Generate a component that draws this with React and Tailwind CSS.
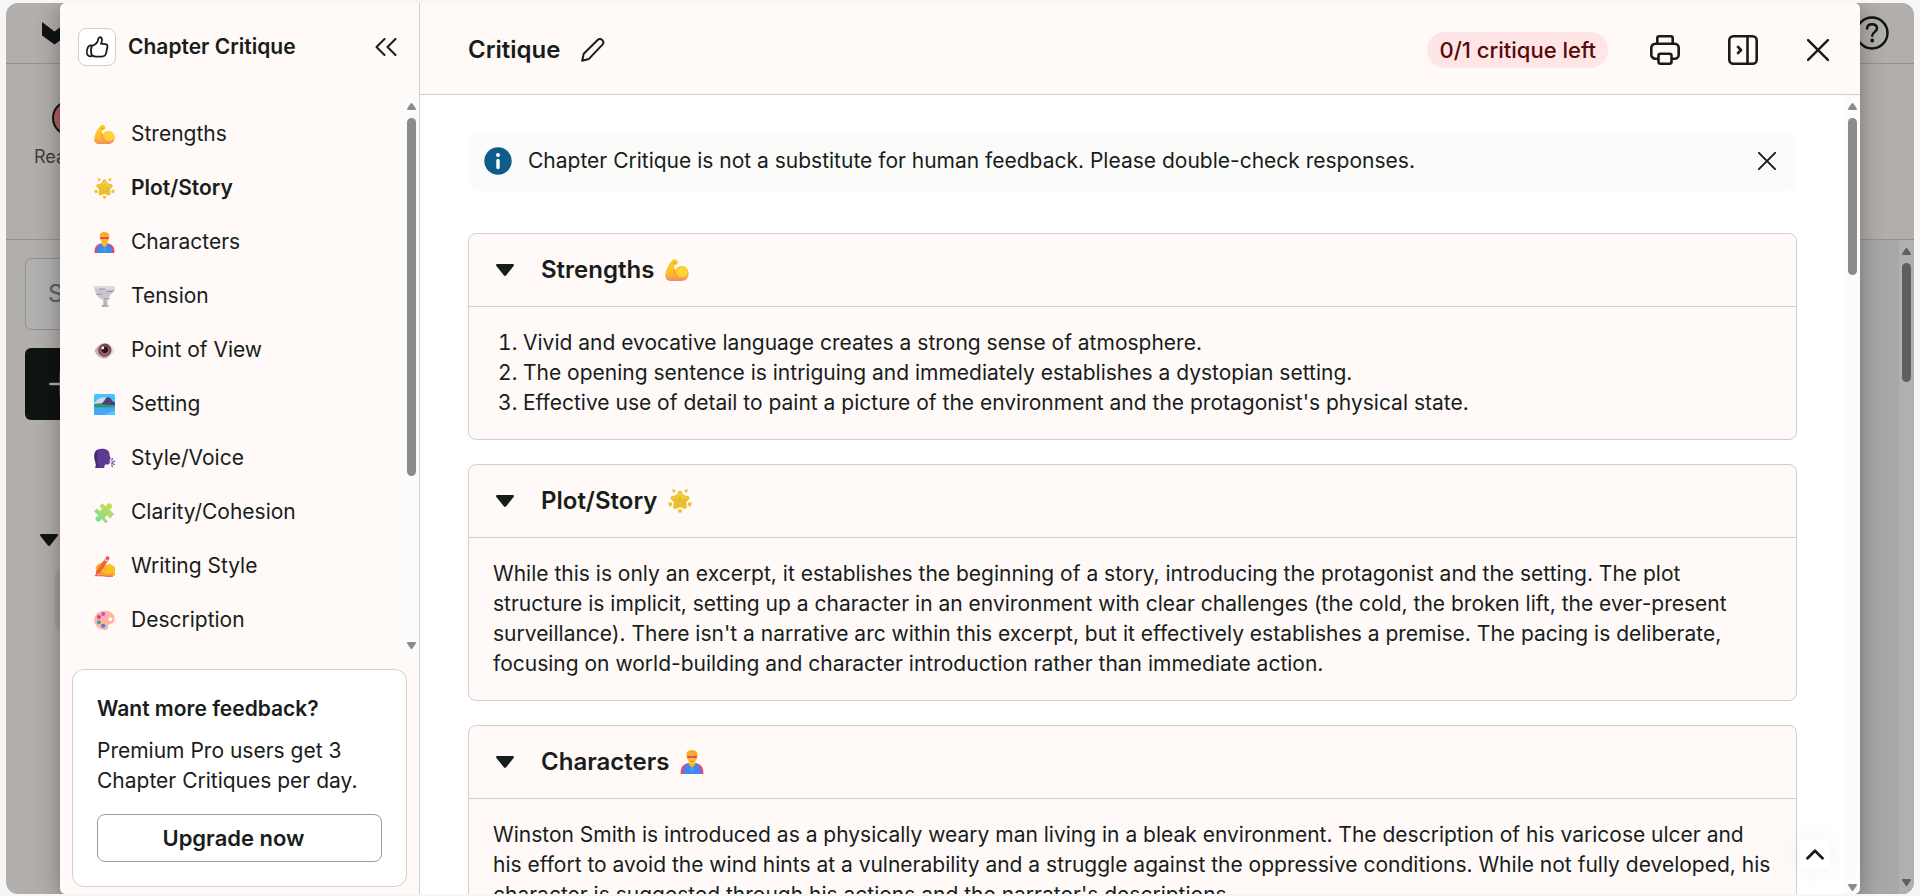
import React, { useState } from 'react';
import clsx from 'clsx';

/* ---------- UI icons ---------- */

const ThumbIcon = () => (
  <svg width="24" height="24" viewBox="0 0 24 24" fill="none" stroke="currentColor" strokeWidth="1.8" strokeLinecap="round" strokeLinejoin="round">
    <path d="M6.800 11c2.800-.9 5.200-2.700 6-5.200.4-1.400.3-3.200 1.800-3.500 1.700-.3 2.600 1.300 2.400 3-.1 1.300-.6 2.300-1 3.400l4.300.4c1.600.1 2.400 1.200 2.100 2.600l-1.200 6.100c-.5 2.300-2 3.600-4.200 3.700l-5.500.1c-1.800 0-3.300-.5-4.400-1.400" />
    <path d="M7 10.500c-1.400-.4-3.100.1-3.900 1.500-1.100 1.900-1.600 4.600-1 7 .5 1.800 2.500 2.800 4.900 2-1.200-2.500-1.400-7.500 0-10.500z" />
  </svg>
);

const CollapseIcon = () => (
  <svg width="22" height="18" viewBox="0 0 22 18" fill="none" stroke="currentColor" strokeWidth="2" strokeLinecap="round" strokeLinejoin="round">
    <path d="M9.500 1L1.500 9l8 8M20.500 1l-8 8 8 8" />
  </svg>
);

const PencilIcon = () => (
  <svg width="24" height="24" viewBox="0 0 24 24" fill="none" stroke="currentColor" strokeWidth="2" strokeLinejoin="round">
    <path d="M1.200 22.800l1.300-6.200c.1-.5.3-.9.700-1.300L16.400 2.200c1.500-1.500 3.700-1.400 4.900-.1 1.300 1.300 1.300 3.300-.1 4.800L8.200 20.600c-.4.4-.8.600-1.300.7z" />
  </svg>
);

const PrinterIcon = () => (
  <svg width="30" height="30" viewBox="0 0 30 30" fill="none" stroke="currentColor" strokeWidth="2.600" strokeLinejoin="round">
    <path d="M7.300 8.800V3.300a2 2 0 0 1 2-2h11.400a2 2 0 0 1 2 2v5.500" />
    <path d="M8.500 23.700H5.300a4 4 0 0 1-4-4v-6.900a4 4 0 0 1 4-4h19.400a4 4 0 0 1 4 4v6.900a4 4 0 0 1-4 4h-3.200" />
    <rect x="8.500" y="18.700" width="13" height="10" rx="2" />
  </svg>
);

const DockIcon = () => (
  <svg width="30" height="30" viewBox="0 0 30 30" fill="none" stroke="currentColor" strokeWidth="2.600" strokeLinejoin="round">
    <rect x="1.300" y="1.300" width="27.400" height="27.400" rx="4" />
    <path d="M19.500 1.500v27M9.300 11.200l3.700 3.800-3.700 3.800" />
  </svg>
);

const CloseIcon = ({ size, weight }) => (
  <svg width={size} height={size} viewBox="0 0 20 20" fill="none" stroke="currentColor" strokeWidth={weight} strokeLinecap="round">
    <path d="M1 1l18 18M19 1L1 19" />
  </svg>
);

const InfoIcon = () => (
  <svg width="28" height="28" viewBox="0 0 28 28" className="shrink-0">
    <circle cx="14" cy="14" r="13.700" fill="#0f5c8c" />
    <circle cx="14" cy="8" r="2" fill="#fff" />
    <path d="M14 13.500v7" stroke="#fff" strokeWidth="3.400" strokeLinecap="round" />
  </svg>
);

const Triangle = () => (
  <svg width="18" height="12" viewBox="0 0 18 12" fill="currentColor" className="shrink-0">
    <path d="M1.300 0h15.400c1.100 0 1.600 1.200.9 2L10.200 11.200c-.7.900-1.700.9-2.400 0L.4 2C-.3 1.200.2 0 1.300 0z" />
  </svg>
);

const ChevronUpIcon = () => (
  <svg width="18" height="11" viewBox="0 0 18 11" fill="none" stroke="currentColor" strokeWidth="2.800" strokeLinecap="round" strokeLinejoin="round">
    <path d="M1.500 9.300L9 1.800l7.500 7.500" />
  </svg>
);

/* ---------- Section emoji ---------- */

const Strong = () => (
  <>
    <defs>
      <linearGradient id="arm" x1="0" y1="0" x2="0" y2="1">
        <stop offset="0" stopColor="#ffc91f" />
        <stop offset=".65" stopColor="#ffbf2e" />
        <stop offset="1" stopColor="#f38b62" />
      </linearGradient>
    </defs>
    <path d="M10 2.500c2-1.500 5-1 6.300.8 1.400 2 .9 4.800-.9 5.700-1.300.6-2.500.4-3.200.1-.3 2.400.2 5 1.300 7.400C15 13 18.500 10.500 22.500 10.500 28 10.500 31.500 15 31.500 20.500c0 6-4 10-9.500 10H8c-5 0-8-3-7.500-8C1 15.500 5.500 7 10 2.500z" fill="url(#arm)" />
    <circle cx="23" cy="19" r="7" fill="#ffd93f" opacity=".75" />
    <path d="M12.500 15c-.8 3.500 0 6.500 2.500 8.500" fill="none" stroke="#f59a1d" strokeWidth="1.500" />
    <path d="M11 6.500c1.500.8 3 .5 3.800-.8" fill="none" stroke="#e98a1b" strokeWidth="1.200" />
  </>
);

const Star = () => (
  <>
    <path d="M16 4.500L19.300 10.500l6.700 1.300-4.400 5.300 1 6.900L16 21.300 9.400 24l1-6.900L6 11.800l6.700-1.300z" fill="#e8bf2d" stroke="#e8bf2d" strokeWidth="5" strokeLinejoin="round" />
    <path d="M16 5l-3 6-6.500 1.500M16 5l3 6 6 1.300" fill="none" stroke="#f4d54a" strokeWidth="1.800" strokeLinecap="round" strokeLinejoin="round" />
    <g fill="#f2bd2c" stroke="#f2bd2c" strokeWidth="1" strokeLinejoin="round">
      <path d="M6 1l4 .8L7.500 5zM26 1l-4 .8L24.500 5z" />
      <path d="M.6 19l4-.8 .6 3.600-2.800 1.200zM31.400 19l-4-.8-.6 3.600 2.800 1.200z" />
      <path d="M14 27.800h4l-.5 3.200h-3z" />
    </g>
  </>
);

const Hero = () => (
  <>
    <path d="M1 32C0 24 4 18.500 10 17.500h12C28 18.500 32 24 31 32z" fill="#ef3f77" />
    <path d="M4 32c-.5-6 2-13 7.500-14.500h9C26 19 28.500 26 28 32z" fill="#3f86ee" />
    <path d="M11 17h10l-2 4-3 2.500-3-2.500z" fill="#f4b71f" />
    <path d="M9 7.500C8 3 11 .5 15.500.5 21 .5 24 3 23 8c0 5.500-2.500 10.500-7 10.500S9.500 13.500 9 7.500z" fill="#ffc62b" />
    <path d="M9 7C8 2.500 11 .3 15.500.3 21 .3 24 3 23.200 7.500 19 7 15 6.500 14 4.500 13 6 11 7 9 7z" fill="#f6ae22" />
    <path d="M9.500 7.800h13v2.500c-2 1.100-4.700 1.100-6.500-.2-1.800 1.300-4.500 1.300-6.500.2z" fill="#ef3f77" />
    <path d="M13.500 14.500c1.500 1 3.500 1 5 0" stroke="#d06b2c" strokeWidth="1.200" fill="none" />
    <path d="M12 25l2.500-1.500L16 25l1.500-1.500L20 25l-4 5z" fill="#3aa0f5" />
  </>
);

const Tornado = () => (
  <>
    <path d="M0 .5h32c.2 4-.5 7-3 9.500-2.500 2.200-5 3.500-5.500 6-.4 2-1.500 3.500-3 4.500l.5 8 2 3H10l3.500-3c.5-3 .5-6-.5-8-4-1.500-7.500-4-9-8C2 9.500.3 5.500 0 .5z" fill="#c9c7ce" />
    <path d="M0 .5h32v3.500c-10 2-22 2-31.500-1z" fill="#dedce2" />
    <path d="M8 4.500h9M20 8.500h9M4 12.500h8M16 19.500h7M13 30.500h8" stroke="#96929f" strokeWidth="1.600" strokeLinecap="round" />
    <path d="M17 21v8" stroke="#a9a5b1" strokeWidth="2" fill="none" />
  </>
);

const Eye = () => (
  <>
    <path d="M1 16C3.500 9.500 9 4.500 16 4.500S28.500 9.500 31 16c-2.500 7-8 12-15 12S3.500 23 1 16z" fill="#e3dde8" />
    <path d="M1 16c2.500 7 8 12 15 12 2 0 4-.5 6-1.500C14 25 8 19 7 9 4.500 11 2 13.500 1 16z" fill="#bfb0cc" />
    <circle cx="16.500" cy="15.500" r="10" fill="#7c4547" />
    <circle cx="16.500" cy="16.500" r="7.500" fill="#a5605a" />
    <circle cx="16.500" cy="15" r="5" fill="#291722" />
    <circle cx="13.500" cy="12" r="2" fill="#fff" />
  </>
);

const Landscape = () => (
  <>
    <rect width="32" height="32" rx="2.500" fill="#43c5f7" />
    <path d="M0 14c3-1 4-6 8-7 3-.7 4-2 7-2 4 0 5 3 9 5v5H0z" fill="#d9d5e2" />
    <path d="M9 16c4-2 6-4 8-8 2-3.500 6-4 8-1.500 2 3 4 5.500 7 6.500v4H9z" fill="#513e76" />
    <path d="M0 16c4-2 8-1.500 10-2 3 2 8 2 22 3v4H0z" fill="#2b9a6e" />
    <path d="M0 20c10 1.500 20 0 32 0v9.500a2.500 2.500 0 0 1-2.500 2.500h-27A2.500 2.500 0 0 1 0 29.500z" fill="#44a5fb" />
    <path d="M16 32c5-4 10-4 16-8v5.500a2.500 2.500 0 0 1-2.500 2.500z" fill="#55c9ff" />
  </>
);

const Speaking = () => (
  <>
    <path d="M2 30.500c1.500-3.500 1-6 0-9.500C.5 16 0 12 1 8 2.500 3 7 1 12 1c7 0 11 2.500 11.500 7.500.2 2 .2 3.500 1.500 6 .8 1.700.5 2.500-1 3 .5 2 .3 4-.5 6-.8 1.700-3 2-6 1.700-1.500 1-2 3-1.700 5.300z" fill="#5c3a94" />
    <path d="M2 30.500c1.500-3.500 1-6 0-9.500C.5 16 0 12 1 8c.7-2.500 2.300-4.500 4.500-5.600C3 10 7 20 6.500 30.500z" fill="#452b70" />
    <path d="M27 19l1-3M28.500 21.500l3-1.500M26 22.500h1.500M28.500 24l3 1.200M27 26l1 2.500" stroke="#7454ab" strokeWidth="1.900" strokeLinecap="round" />
  </>
);

const Puzzle = () => (
  <>
    <defs>
      <linearGradient id="piece" x1="1" y1="0" x2="0" y2="1">
        <stop offset="0" stopColor="#d6d84f" />
        <stop offset=".5" stopColor="#a6dd6c" />
        <stop offset="1" stopColor="#61e3a3" />
      </linearGradient>
    </defs>
    <path d="M8 7l5-5 4 4c1.500 1.200 2.300.5 2.300-1C19.500 2.500 23 .5 26 3s1.700 6-.8 7c-1.500.3-1.800 1-.7 2.300L30 18l-5 5.500c-1.200 1-2 .7-2.200-.5-.8-2.500-4-2.500-5.300-.8-1.300 2-.5 4.300 1.500 4.800 1.700.3 1.800 1.300.8 2.300L17.500 32l-5-5.300c-1.200-1.200-2-.7-2.300.8-.7 2.500-4.500 3.300-6.700 1-2.300-2.500-1.300-6 1.300-6.500 1.500-.3 2-1.300.8-2.500L0 14l3.500-3.500c1-.9 2-.7 2.300.7.7 2.300 3.700 2.800 5.200 1 1.500-1.700.8-4-1.500-4.600C8.500 7.400 8 7.200 8 7z" fill="url(#piece)" />
    <path d="M30 18l-5 5.500c-1.200 1-2 .7-2.200-.5M17.500 32l3-3" stroke="#a99bc0" strokeWidth="1.200" fill="none" />
  </>
);

const Writing = () => (
  <>
    <path d="M2 18c2-4 6-7.500 11-8l5 4c3-1 5-2.500 7.500-1.500 2 1.300 5 3.500 6.500 4.500v12c-4 1.500-8 2.500-13 2-5 0-12-1-13-4-.7-3-3-6-4-9z" fill="#fbbf22" />
    <path d="M8 25c3-1 6-.5 8 1 4 2 9 2 15.500 0v3.500c-5 2-12 2.500-17.500 1.500-4-.7-6.500-3-6-6z" fill="#f3a23a" />
    <path d="M2 30h13M18 31h10" stroke="#e86f7f" strokeWidth="2" strokeLinecap="round" />
    <path d="M18 2.500l5 2.500L9.500 26 2 30.500 3.500 22z" fill="#f4623a" />
    <path d="M18 2.500c1-2 2.500-2.700 4-1.800 1.500.8 1.700 2.300 1 4.300z" fill="#e5376b" />
    <path d="M16 5.500l5.200 2.700" stroke="#d9d5e4" strokeWidth="2" />
    <path d="M4 17c2-2 5-2.500 7-2M14 18c2 1 4 2 5 4" stroke="#e8952a" strokeWidth="1.500" fill="none" />
  </>
);

const Palette = () => (
  <>
    <path d="M16 1c9 0 15.500 5 15.500 12.500 0 4-2 7-5.500 7.500-3 .4-5 1.500-4.700 4.500.2 3-1.300 5.500-5.300 5C7 29.500.5 24 .5 15 .5 7 7 1 16 1z" fill="#ffb3a0" />
    <circle cx="25" cy="14" r="2.800" fill="#fff" />
    <circle cx="14" cy="6" r="3" fill="#bd50ee" />
    <circle cx="7.500" cy="10.500" r="3" fill="#df3b7a" />
    <circle cx="7.500" cy="18.500" r="3" fill="#31a6a8" />
    <circle cx="14" cy="24" r="3.200" fill="#3b86ea" />
  </>
);

const Emoji = ({ art: Art, className }) => (
  <svg viewBox="0 0 32 32" className={clsx('shrink-0', className)} aria-hidden="true">
    <Art />
  </svg>
);

/* ---------- Data ---------- */

const NAV_ITEMS = [
  { label: 'Strengths', art: Strong },
  { label: 'Plot/Story', art: Star },
  { label: 'Characters', art: Hero },
  { label: 'Tension', art: Tornado },
  { label: 'Point of View', art: Eye },
  { label: 'Setting', art: Landscape },
  { label: 'Style/Voice', art: Speaking },
  { label: 'Clarity/Cohesion', art: Puzzle },
  { label: 'Writing Style', art: Writing },
  { label: 'Description', art: Palette },
];

const SECTIONS = [
  {
    title: 'Strengths',
    art: Strong,
    list: [
      'Vivid and evocative language creates a strong sense of atmosphere.',
      'The opening sentence is intriguing and immediately establishes a dystopian setting.',
      "Effective use of detail to paint a picture of the environment and the protagonist's physical state.",
    ],
  },
  {
    title: 'Plot/Story',
    art: Star,
    text: "While this is only an excerpt, it establishes the beginning of a story, introducing the protagonist and the setting. The plot structure is implicit, setting up a character in an environment with clear challenges (the cold, the broken lift, the ever-present surveillance). There isn't a narrative arc within this excerpt, but it effectively establishes a premise. The pacing is deliberate, focusing on world-building and character introduction rather than immediate action.",
  },
  {
    title: 'Characters',
    art: Hero,
    text: "Winston Smith is introduced as a physically weary man living in a bleak environment. The description of his varicose ulcer and his effort to avoid the wind hints at a vulnerability and a struggle against the oppressive conditions. While not fully developed, his character is suggested through his actions and the narrator's descriptions.",
  },
];

/* ---------- Pieces ---------- */

const ScrollRail = ({ thumb, className, tone = 'text-[#8b8b8b]' }) => (
  <div className={clsx('flex w-[15px] shrink-0 flex-col items-center pt-2', className, tone)} aria-hidden="true">
    <svg width="9" height="7" viewBox="0 0 9 7" className="shrink-0" fill="currentColor">
      <path d="M3.600.6c.5-.7 1.300-.7 1.800 0L8.800 5.500c.4.700 0 1.500-.8 1.500H1C.2 7-.2 6.200.2 5.500z" />
    </svg>
    <div className={clsx('mt-2 w-[9px] shrink-0 rounded-full bg-current', thumb)} />
    <svg width="9" height="7" viewBox="0 0 9 7" className="mt-auto shrink-0" fill="currentColor">
      <path d="M3.600 6.400c.5.700 1.300.7 1.800 0L8.800 1.500C9.200.8 8.800 0 8 0H1C.2 0-.2.8.2 1.500z" />
    </svg>
  </div>
);

const Workspace = () => (
  <div className="flex h-full flex-col overflow-hidden bg-[#b2aeab] text-[#0f1412]">
    <div className="flex h-[61px] shrink-0 items-center justify-between border-b border-[#949291] pr-[25px] pl-9">
      <svg width="38" height="24" viewBox="0 0 38 24" fill="currentColor">
        <path d="M0 1l12.500 9.500L25 1v13.500L12.500 23.500 0 14.500z" />
      </svg>
      <svg width="34" height="34" viewBox="0 0 34 34" fill="none" stroke="currentColor" strokeWidth="2.400" strokeLinecap="round">
        <circle cx="17" cy="17" r="15.500" />
        <path d="M12 12.500c.3-2.800 2.300-4.300 5-4.300 3 0 5 1.700 5 4.300 0 3.200-4.500 3.500-4.800 7.200" />
        <circle cx="17.200" cy="24.500" r=".7" fill="currentColor" />
      </svg>
    </div>
    <div className="flex h-44 shrink-0 flex-col items-start border-b border-[#949291] pt-9 pl-7">
      <div className="ml-[18px] h-9 w-9 rounded-full border-2 border-[#0f1412] bg-[#b0605f]" />
      <span className="mt-[9px] text-lg leading-6 text-[#3c403e]">Realtime</span>
    </div>
    <div className="flex min-h-0 flex-1 justify-between">
      <div className="flex w-96 flex-col pt-[18px] pl-[19px]">
        <div className="flex h-[72px] items-center rounded-md border border-[#8f9090] bg-[#b1b1b1] pl-[22px] text-2xl text-[#5a5f5d]">Search</div>
        <div className="mt-[18px] flex h-[72px] items-center rounded-md bg-[#0f1412] pl-6">
          <svg width="24" height="24" viewBox="0 0 24 24" stroke="#b1b1b1" strokeWidth="2.600" strokeLinecap="round">
            <path d="M1.500 12h21M12 1.500v21" />
          </svg>
        </div>
        <div className="mt-[114px] ml-[15px]">
          <Triangle />
        </div>
        <div className="mt-6 ml-[30px] h-[60px] rounded-md bg-[#a89f99]" />
      </div>
      <div className="flex w-96 justify-end bg-[#a9a8a8]">
        <ScrollRail thumb="h-[119px]" tone="text-[#5f5f5f]" className="bg-[#b0b0b0] pb-2" />
      </div>
    </div>
  </div>
);

const Sidebar = ({ active, onSelect }) => (
  <aside className="flex w-[360px] shrink-0 flex-col border-r border-[#cfcfcf] bg-[#fff9f7]">
    <div className="flex h-[92px] shrink-0 items-start pt-[25px] pr-[22px] pl-[18px]">
      <span className="flex h-[38px] w-[38px] items-center justify-center rounded-lg border border-[#cfcfcf] bg-white">
        <ThumbIcon />
      </span>
      <h1 className="ml-3 flex-1 text-[21px] leading-[38px] font-semibold">Chapter Critique</h1>
      <button type="button" aria-label="Collapse sidebar" className="flex h-[38px] items-center">
        <CollapseIcon />
      </button>
    </div>

    <div className="flex min-h-0 flex-1">
      <nav className="flex-1 overflow-y-auto pt-3 [scrollbar-width:none]">
        {NAV_ITEMS.map(({ label, art }) => (
          <button
            key={label}
            type="button"
            onClick={() => onSelect(label)}
            className={clsx('flex h-[54px] w-full items-center gap-4 pl-[34px] text-left text-[21px]', label === active && 'font-semibold')}
          >
            <Emoji art={art} className="h-[21px] w-[21px]" />
            {label}
          </button>
        ))}
      </nav>
      <ScrollRail thumb="h-[358px]" className="bg-[#fcfcfc] pb-2" />
    </div>

    <div className="mx-3 mt-3 mb-[7px] rounded-xl border border-[#cfcfcf] bg-white p-6">
      <h2 className="text-[21px] leading-[30px] font-semibold">Want more feedback?</h2>
      <p className="mt-3 text-[21px] leading-[30px]">Premium Pro users get 3 Chapter Critiques per day.</p>
      <button type="button" className="mt-[18px] h-12 w-full rounded-lg border border-[#9a9a9a] pr-3 text-[22px] font-semibold">
        Upgrade now
      </button>
    </div>
  </aside>
);

const Section = ({ title, art, list, text }) => {
  const [open, setOpen] = useState(true);

  return (
    <section className="mb-6 rounded-lg border border-[#cfcfcf] bg-[#fff9f7]">
      <button type="button" aria-expanded={open} onClick={() => setOpen(!open)} className="flex h-[72px] w-full items-center pl-[27px] text-left">
        <Triangle />
        <h3 className="ml-[27px] text-2xl font-semibold">{title}</h3>
        <Emoji art={art} className="ml-[11px] h-6 w-6" />
      </button>
      {open && (
        <div className="border-t border-[#cfcfcf] px-6 py-[21px] text-[21px] leading-[30px]">
          {list ? (
            <ol className="list-decimal pl-[30px]">
              {list.map((item) => <li key={item}>{item}</li>)}
            </ol>
          ) : (
            <p>{text}</p>
          )}
        </div>
      )}
    </section>
  );
};

const App = () => {
  const [active, setActive] = useState('Plot/Story');
  const [showNotice, setShowNotice] = useState(true);

  return (
    <div className="h-screen overflow-hidden bg-[#f6f6f6] px-1.5 pt-[3px] pb-0.5 font-['Inter',sans-serif] text-[#181d1b]">
      <div className="relative h-full overflow-hidden rounded-xl">
        <Workspace />

        {/* Modal */}
        <div role="dialog" aria-label="Chapter Critique" className="absolute inset-x-[54px] inset-y-0 flex overflow-hidden rounded-md bg-white shadow-[0_4px_24px_rgba(0,0,0,0.35)]">
          <Sidebar active={active} onSelect={setActive} />

          <main className="relative flex min-w-0 flex-1 flex-col">
            <header className="flex h-[92px] shrink-0 items-center border-b border-[#cfcfcf] bg-[#fff9f7] pt-0.5 pr-[31px] pl-12">
              <h2 className="text-2xl font-semibold">Critique</h2>
              <button type="button" aria-label="Rename" className="ml-[21px]">
                <PencilIcon />
              </button>
              <span className="ml-auto rounded-full bg-[#ffe5e5] px-3 text-[22px] leading-9 font-medium text-[#560a0a]">0/1 critique left</span>
              <button type="button" aria-label="Print" className="ml-[42px]">
                <PrinterIcon />
              </button>
              <button type="button" aria-label="Dock to side" className="ml-12">
                <DockIcon />
              </button>
              <button type="button" aria-label="Close" className="ml-[49px]">
                <CloseIcon size={22} weight={2.2} />
              </button>
            </header>

            <div className="flex min-h-0 flex-1">
              <div className="flex-1 overflow-y-auto px-12 pt-9 [scrollbar-width:none]">
                {showNotice && (
                  <div className="mb-[42px] flex h-[60px] items-center rounded-xl bg-[#fbfbf9] pr-[21px] pl-4">
                    <InfoIcon />
                    <p className="ml-4 flex-1 text-[21px]">Chapter Critique is not a substitute for human feedback. Please double-check responses.</p>
                    <button type="button" aria-label="Dismiss" onClick={() => setShowNotice(false)}>
                      <CloseIcon size={18} weight={2.2} />
                    </button>
                  </div>
                )}
                {SECTIONS.map((section) => <Section key={section.title} {...section} />)}
              </div>
              <ScrollRail thumb="h-[157px]" className="bg-[#fcfcfc] pb-[3px]" />
            </div>

            {/* Back to top */}
            <button type="button" aria-label="Back to top" className="absolute right-[30px] bottom-[25px] flex h-[30px] w-[30px] items-center justify-center rounded-md bg-white shadow-[0_0_24px_rgba(0,0,0,0.06)]">
              <ChevronUpIcon />
            </button>
          </main>
        </div>
      </div>
    </div>
  );
};

export default App;
